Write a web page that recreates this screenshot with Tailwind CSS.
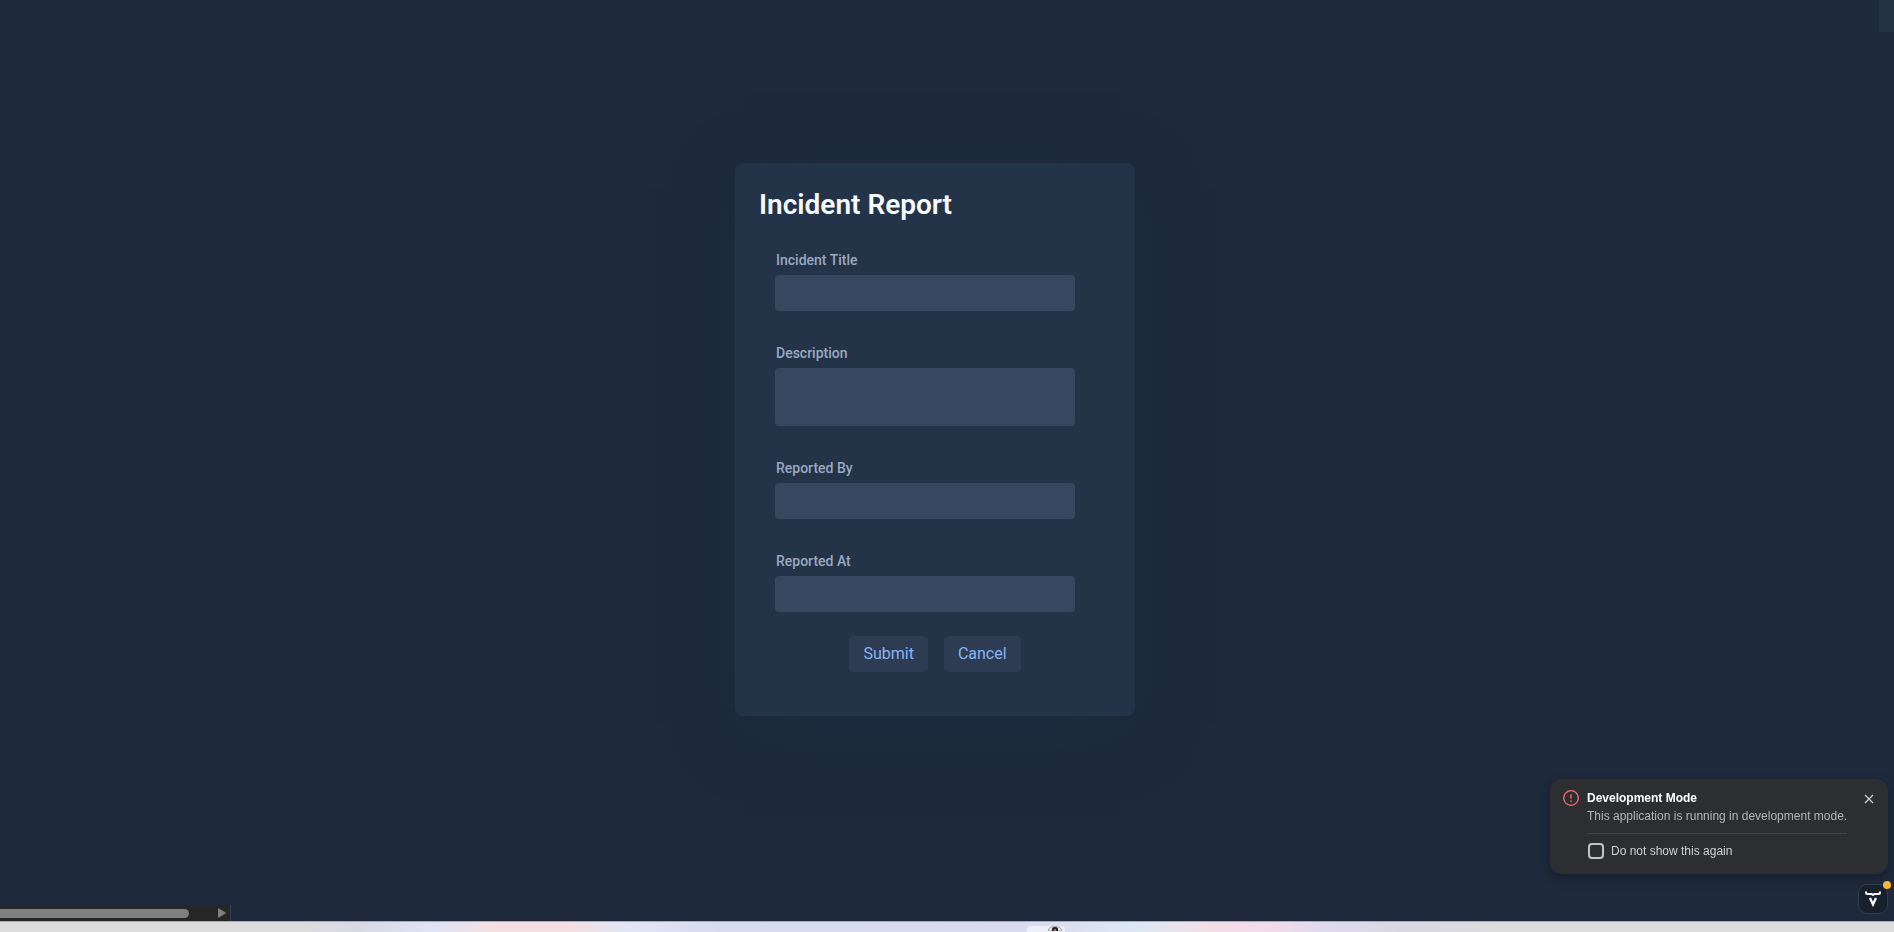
<!DOCTYPE html>
<html lang="en">
<head>
    <meta charset="UTF-8">
    <meta name="viewport" content="width=device-width, initial-scale=1.0">
    <title>Incident Report</title>
    <script src="https://cdn.jsdelivr.net/npm/@tailwindcss/browser@4"></script>
</head>
<body class="bg-[#1e293b] min-h-screen flex flex-col overflow-hidden font-['Roboto',sans-serif]">
    <!-- Corner of the side panel -->
    <div class="absolute top-0 right-0 w-[15px] h-8 bg-[#243241]"></div>

    <!-- Main Container -->
    <main class="flex-1 flex items-center justify-center pr-6 pb-[26px]">
        <form class="w-full max-w-[400px] rounded-lg bg-[#233348] px-6 pt-6 pb-11 shadow-[0_16px_64px_-10px_#1a2e40]">
            <h1 class="text-[28px] leading-9 font-semibold text-[#f5f9ff]">Incident Report</h1>

            <!-- Fields -->
            <div class="flex flex-col gap-[30px] pt-[25px] pl-4 pr-9">
                <div class="flex flex-col">
                    <label for="incident-title" class="h-[27px] pl-px text-sm leading-6 font-medium text-[#99a9c0]">Incident Title</label>
                    <input type="text" id="incident-title" class="h-9 rounded bg-[#36485f] px-2 text-[#f5f9ff]">
                </div>
                <div class="flex flex-col">
                    <label for="description" class="h-[27px] pl-px text-sm leading-6 font-medium text-[#99a9c0]">Description</label>
                    <textarea id="description" class="h-[58px] resize-none rounded bg-[#36485f] px-2 py-1 text-[#f5f9ff]"></textarea>
                </div>
                <div class="flex flex-col">
                    <label for="reported-by" class="h-[27px] pl-px text-sm leading-6 font-medium text-[#99a9c0]">Reported By</label>
                    <input type="text" id="reported-by" class="h-9 rounded bg-[#36485f] px-2 text-[#f5f9ff]">
                </div>
                <div class="flex flex-col">
                    <label for="reported-at" class="h-[27px] pl-px text-sm leading-6 font-medium text-[#99a9c0]">Reported At</label>
                    <input type="text" id="reported-at" class="h-9 rounded bg-[#36485f] px-2 text-[#f5f9ff]">
                </div>
            </div>

            <!-- Buttons -->
            <div class="mt-6 flex justify-center gap-4">
                <button type="submit" class="h-9 rounded bg-[#2d3c52] px-[14px] text-base text-[#8ab4f3]">Submit</button>
                <button type="button" class="h-9 rounded bg-[#2d3c52] px-[14px] text-base text-[#8ab4f3]">Cancel</button>
            </div>
        </form>
    </main>

    <!-- Horizontal scrollbar -->
    <div class="flex h-4 w-[231px] items-center justify-between border-r border-[#2f3e52] bg-[#262626] pr-1">
        <div class="h-[9px] w-[189px] rounded-r-full bg-[#808080]"></div>
        <svg class="h-[10px] w-2" viewBox="0 0 8 10" fill="#808080"><path d="M0 1Q0 0 1 .5L7.5 4.4Q8 5 7.5 5.6L1 9.5Q0 10 0 9Z"/></svg>
    </div>

    <!-- Desktop strip below the window -->
    <div class="flex h-[11px] items-end justify-center border-t border-[#a9acb2] bg-[linear-gradient(90deg,#dcdcdc_0%,#dcdcdc_16%,#d9d9e6_19%,#dfe4f3_23%,#f6dfe2_26%,#f6dfe2_30%,#e2e6f5_33%,#d7dbef_38%,#d9dcef_55%,#dde8f4_60%,#f4dee5_64%,#f2dbe9_67%,#dfdaee_70%,#d9d8e2_74%,#dcdcdc_79%,#dcdcdc_100%)] pl-[198px]">
        <div class="flex h-[6px] w-[38px] justify-end rounded-t bg-[#edf0f9] pr-[3px]">
            <svg class="h-[5px] w-[14px]" viewBox="0 0 14 5"><path d="M0 5Q1 .5 7 .5T14 5Z" fill="#e8e8e8" stroke="#8c8c8c" stroke-width=".8"/><path d="M4 5V3Q4 1 7 1T10 3V5Z" fill="#2a2221"/><path d="M6 3H8V5H6Z" fill="#a5735f"/></svg>
        </div>
    </div>

    <!-- Development mode notification -->
    <aside class="fixed right-[6px] bottom-[58px] flex w-[338px] h-[95px] rounded-xl bg-[#2d2e31] pl-[13px] pr-[14px] pt-[11px] font-['Liberation_Sans',sans-serif] text-xs text-[#b5b5b6] shadow-[0_4px_12px_rgba(0,0,0,0.25)]">
        <svg class="mr-2 size-4 shrink-0" viewBox="0 0 16 16" fill="none" stroke="#ff6b72" stroke-width="1.3"><circle cx="8" cy="8" r="7.3"/><path d="M8 4.2V8.8M8 10.4V12"/></svg>
        <div class="w-[260px]">
            <h2 class="leading-4 font-bold text-white">Development Mode</h2>
            <p class="pt-[2px] leading-4 whitespace-nowrap">This application is running in development mode.</p>
            <div class="mt-[9px] flex items-center border-t border-[#45464a] pt-[9px]">
                <input type="checkbox" id="dismiss" class="ml-px size-4 appearance-none rounded-[4px] border-2 border-[#c4c4c5]">
                <label for="dismiss" class="pl-[7px] leading-4 text-[#d0d0d1]">Do not show this again</label>
            </div>
        </div>
        <button type="button" aria-label="Close" class="mt-1 ml-auto size-[10px]">
            <svg class="size-[10px]" viewBox="0 0 10 10" fill="none" stroke="#d0d0d1" stroke-width="1.2"><path d="M1 1L9 9M9 1L1 9"/></svg>
        </button>
    </aside>

    <!-- Dev tools button -->
    <button type="button" aria-label="Development tools" class="fixed right-[6px] bottom-[18px] flex size-[30px] items-center justify-center rounded-[9px] border border-[#2f3d4d] bg-[#17212d]">
        <svg class="size-4" viewBox="0 0 16 16" fill="none" stroke="#fff" stroke-width="2"><path d="M1 .5V1.5Q1 3 2.5 3H6Q8 3 8 4.8Q8 3 10 3H13.5Q15 3 15 1.5V.5"/><path d="M5 7L8 13.4L11 7" stroke-width="2.3"/></svg>
        <span class="absolute -top-[4px] -right-[4px] size-2 rounded-full bg-[#ffb43a]"></span>
    </button>
</body>
</html>
